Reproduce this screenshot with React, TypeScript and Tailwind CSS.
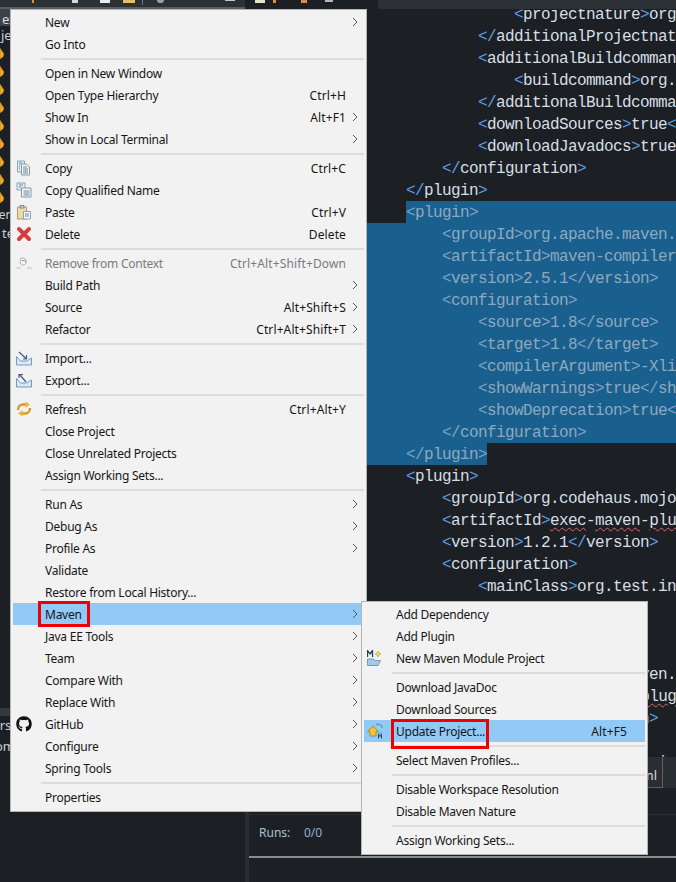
import { FaGithub } from "react-icons/fa";

type MenuRow = {
  label?: string;
  shortcut?: string;
  arrow?: boolean;
  icon?: React.ReactNode;
  disabled?: boolean;
  active?: boolean;
  mark?: string;
};

const CopyIcon = () => (
  <svg width="16" height="16" viewBox="0 0 16 16">
    <path d="M1.5 1h7v11h-7z" fill="#e4ebf2" stroke="#8ea3b5" />
    <path d="M5.5 4h5l3 3v8h-8z" fill="#f4f6f8" stroke="#8a9a8c" />
    <path d="M7 7h4M7 9h5M7 11h5M7 13h5M3 3h3M3 5h1M3 7h1M3 9h1" stroke="#5f87b0" />
  </svg>
);

const CopyNameIcon = () => (
  <svg width="16" height="16" viewBox="0 0 16 16">
    <path d="M1 1h8v7H1z" fill="#e4ebf2" stroke="#8ea3b5" />
    <path d="M5.5 6H15v9H5.5z" fill="#f4f6f8" stroke="#8a9a8c" />
    <path d="M3 3h4M3 5h2M7.5 9h6M7.5 11h6M7.5 13h6" stroke="#5f87b0" />
  </svg>
);

const PasteIcon = () => (
  <svg width="16" height="16" viewBox="0 0 16 16">
    <path d="M1.5 3h9v12h-9z" fill="#eed9a8" stroke="#b29a66" />
    <path d="M4 1.5h4V4H4z" fill="#c9d3dc" stroke="#75889a" />
    <path d="M7.5 7.5h7v7.5h-7z" fill="#f6f8fa" stroke="#8ea3b5" />
    <path d="M9 10h4M9 12h4" stroke="#5f87b0" />
  </svg>
);

const DeleteIcon = () => (
  <svg width="16" height="16" viewBox="0 0 16 16">
    <path d="M3 3l10 10M13 3L3 13" stroke="#d83c3c" strokeWidth="4" strokeLinecap="round" />
  </svg>
);

const RemoveIcon = () => (
  <svg width="16" height="16" viewBox="0 0 16 16" fill="none">
    <path d="M5 3h3l2 2v3l-2 2H6L4 8z" stroke="#b5b5b5" />
    <path d="M6 5.500h3l1.500 2" stroke="#9a9a9a" />
    <path d="M0 13h5M11 13h5" stroke="#c4c4c4" />
  </svg>
);

const ImportIcon = ({ out }: { out?: boolean }) => (
  <svg width="16" height="16" viewBox="0 0 16 16" fill="none">
    <path d="M.5 6.500v8.500h15V8" fill="#dbe7f2" stroke="#6f9cc6" />
    <path d="M.5 6.500l4 4.500h6l5-3" fill="#f2f6fa" stroke="#6f9cc6" />
    {out ? (
      <path d="M10 10L4 3M3 6V2.500h4" stroke="#3c5f86" strokeWidth="1.200" />
    ) : (
      <path d="M3 2l7 6.500M10.500 5v4H7" stroke="#3c5f86" strokeWidth="1.200" />
    )}
  </svg>
);

const RefreshIcon = () => (
  <svg width="16" height="16" viewBox="0 0 16 16" fill="none">
    <path d="M2 9c0-3 2-5.500 5-5.500h3" stroke="#d79a26" strokeWidth="2.400" />
    <path d="M9.500.500L14 3.500 9.500 7z" fill="#eeb540" />
    <path d="M14 7c0 3-2 5.500-5 5.500H6" stroke="#d79a26" strokeWidth="2.400" />
    <path d="M6.500 9L2 12.500 6.500 15.500z" fill="#eeb540" />
  </svg>
);

const MavenNewIcon = () => (
  <svg width="16" height="16" viewBox="0 0 16 16" fill="none">
    <path d="M.5 7V.5L3 4l2.500-3.500V7" stroke="#27405e" strokeWidth="1.300" />
    <path d="M11 1l1 2 2 1-2 1-1 2-1-2-2-1 2-1z" fill="#f5d467" stroke="#c09a2c" strokeWidth=".6" />
    <path d="M.5 9h6l1 1.500h6L11 15.500H.5z" fill="#a9c8e6" stroke="#6f9cc6" />
  </svg>
);

const MavenUpdateIcon = () => (
  <svg width="18" height="16" viewBox="0 0 18 16" fill="none">
    <path d="M9 2c3-2 6 0 6 3" stroke="#6f9cc6" strokeWidth="1.600" />
    <path d="M15 10c-1.500 1-3 1-4 .5" stroke="#6f9cc6" strokeWidth="1.600" />
    <path d="M6 3L.5 8.500H3V13h6V8.500h2.500z" fill="#f2c23e" stroke="#a87c18" strokeWidth=".8" />
    <path d="M11.500 15.500v-4l1.500 2 1.500-2v4" stroke="#27405e" strokeWidth="1" />
  </svg>
);

const mainMenu: (MenuRow | null)[] = [
  { label: "New", arrow: true },
  { label: "Go Into" },
  null,
  { label: "Open in New Window" },
  { label: "Open Type Hierarchy", shortcut: "Ctrl+H" },
  { label: "Show In", shortcut: "Alt+F1", arrow: true },
  { label: "Show in Local Terminal", arrow: true },
  null,
  { label: "Copy", shortcut: "Ctrl+C", icon: <CopyIcon /> },
  { label: "Copy Qualified Name", icon: <CopyNameIcon /> },
  { label: "Paste", shortcut: "Ctrl+V", icon: <PasteIcon /> },
  { label: "Delete", shortcut: "Delete", icon: <DeleteIcon /> },
  null,
  { label: "Remove from Context", shortcut: "Ctrl+Alt+Shift+Down", disabled: true, icon: <RemoveIcon /> },
  { label: "Build Path", arrow: true },
  { label: "Source", shortcut: "Alt+Shift+S", arrow: true },
  { label: "Refactor", shortcut: "Ctrl+Alt+Shift+T", arrow: true },
  null,
  { label: "Import...", icon: <ImportIcon /> },
  { label: "Export...", icon: <ImportIcon out /> },
  null,
  { label: "Refresh", shortcut: "Ctrl+Alt+Y", icon: <RefreshIcon /> },
  { label: "Close Project" },
  { label: "Close Unrelated Projects" },
  { label: "Assign Working Sets..." },
  null,
  { label: "Run As", arrow: true },
  { label: "Debug As", arrow: true },
  { label: "Profile As", arrow: true },
  { label: "Validate" },
  { label: "Restore from Local History..." },
  { label: "Maven", arrow: true, active: true, mark: "left-[25px] -top-[2px] w-[52px] h-[26px]" },
  { label: "Java EE Tools", arrow: true },
  { label: "Team", arrow: true },
  { label: "Compare With", arrow: true },
  { label: "Replace With", arrow: true },
  { label: "GitHub", arrow: true, icon: <FaGithub size={16} color="#111" /> },
  { label: "Configure", arrow: true },
  { label: "Spring Tools", arrow: true },
  null,
  { label: "Properties" },
];

const mavenMenu: (MenuRow | null)[] = [
  { label: "Add Dependency" },
  { label: "Add Plugin" },
  { label: "New Maven Module Project", icon: <MavenNewIcon /> },
  null,
  { label: "Download JavaDoc" },
  { label: "Download Sources" },
  {
    label: "Update Project...",
    shortcut: "Alt+F5",
    active: true,
    icon: <MavenUpdateIcon />,
    mark: "left-[27px] -top-[1px] w-[98px] h-[30px]",
  },
  null,
  { label: "Select Maven Profiles..." },
  null,
  { label: "Disable Workspace Resolution" },
  { label: "Disable Maven Nature" },
  null,
  { label: "Assign Working Sets..." },
];

function MenuItems({ rows }: { rows: (MenuRow | null)[] }) {
  return (
    <>
      {rows.map((r, i) =>
        r === null ? (
          <div key={i} className="h-[7px] flex items-center ml-[30px] mr-[2px]">
            <div className="h-[2px] w-full bg-[#dcdcdc]" />
          </div>
        ) : (
          <div
            key={i}
            className={`relative h-[22px] mx-[2px] flex items-center ${r.active ? "bg-[#91c9f7]" : ""} ${
              r.disabled ? "text-[#7a7a7a]" : "text-[#161616]"
            }`}
          >
            <div className="w-[28px] pl-[3px] flex items-center shrink-0">{r.icon}</div>
            <span className="pl-[4px] pt-[2px] flex-1 whitespace-nowrap tracking-[-0.25px]">{r.label}</span>
            {r.shortcut && <span className="pt-[2px] whitespace-nowrap tracking-[0.12px]">{r.shortcut}</span>}
            <div className="w-[18px] pl-[6px] shrink-0">
              {r.arrow && (
                <svg width="6" height="10" viewBox="0 0 6 10" fill="none">
                  <path d="M1 1l4 4-4 4" stroke="#555" />
                </svg>
              )}
            </div>
            {r.mark && <div className={`absolute border-[3px] border-[#ec0000] ${r.mark}`} />}
          </div>
        ),
      )}
    </>
  );
}

type CodeLine = { d: number; t: string; wavy?: boolean; sel?: "first" | "full" | "last" };

const code: CodeLine[] = [
  { d: 3, t: "<projectnature>org.eclipse.jdt.core.javanature</projectnature>" },
  { d: 2, t: "</additionalProjectnatures>" },
  { d: 2, t: "<additionalBuildcommands>" },
  { d: 3, t: "<buildcommand>org.eclipse.jdt.core.javabuilder</buildcommand>" },
  { d: 2, t: "</additionalBuildcommands>" },
  { d: 2, t: "<downloadSources>true</downloadSources>" },
  { d: 2, t: "<downloadJavadocs>true</downloadJavadocs>" },
  { d: 1, t: "</configuration>" },
  { d: 0, t: "</plugin>" },
  { d: 0, t: "<plugin>", sel: "first" },
  { d: 1, t: "<groupId>org.apache.maven.plugins</groupId>", sel: "full" },
  { d: 1, t: "<artifactId>maven-compiler-plugin</artifactId>", sel: "full" },
  { d: 1, t: "<version>2.5.1</version>", sel: "full" },
  { d: 1, t: "<configuration>", sel: "full" },
  { d: 2, t: "<source>1.8</source>", sel: "full" },
  { d: 2, t: "<target>1.8</target>", sel: "full" },
  { d: 2, t: "<compilerArgument>-Xlint:all</compilerArgument>", sel: "full" },
  { d: 2, t: "<showWarnings>true</showWarnings>", sel: "full" },
  { d: 2, t: "<showDeprecation>true</showDeprecation>", sel: "full" },
  { d: 1, t: "</configuration>", sel: "full" },
  { d: 0, t: "</plugin>", sel: "last" },
  { d: 0, t: "<plugin>" },
  { d: 1, t: "<groupId>org.codehaus.mojo</groupId>" },
  { d: 1, t: "<artifactId>exec-maven-plugin</artifactId>", wavy: true },
  { d: 1, t: "<version>1.2.1</version>" },
  { d: 1, t: "<configuration>" },
  { d: 2, t: "<mainClass>org.test.int1.Main</mainClass>" },
  { d: 1, t: "</configuration>" },
  { d: 0, t: "</plugin>" },
  { d: 0, t: "<plugin>" },
  { d: 1, t: "<groupId>org.apache.maven.plugins</groupId>" },
  { d: 1, t: "<artifactId>maven-jar-plugin</artifactId>", wavy: true },
  { d: 1, t: "<version>2.5.1</version>" },
  { d: 1, t: "<configuration>" },
  { d: 2, t: "<mainClass>org.test.int1.f</mainClass>" },
];

const indent = ["pl-[157px]", "pl-[193px]", "pl-[229px]", "pl-[265px]"];

function CodeText({ line }: { line: CodeLine }) {
  const parts = line.t.split(/(<\/?|>)/).filter(Boolean);
  return (
    <>
      {parts.map((p, i) => {
        if (p === "<" || p === "</" || p === ">") {
          return (
            <span key={i} className={line.sel ? "text-[#7fa3c4]" : "text-[#5c9fe6]"}>
              {p}
            </span>
          );
        }
        if (line.wavy && i > 0 && parts[i - 1] === ">") {
          return (
            <span key={i}>
              {p.split(/(-)/).map((w, j) =>
                w === "-" ? (
                  w
                ) : (
                  <span key={j} className="underline decoration-wavy decoration-[#d9676a] decoration-1 underline-offset-2">
                    {w}
                  </span>
                ),
              )}
            </span>
          );
        }
        return <span key={i}>{p}</span>;
      })}
    </>
  );
}

function CodeRow({ line }: { line: CodeLine }) {
  const tone = line.sel ? "text-[#8ea9bd]" : "text-[#d6dfe6]";
  if (line.sel === "first") {
    return (
      <div className={`h-[22px] leading-[25px] ml-[157px] bg-[#1a608f] ${tone}`}>
        <CodeText line={line} />
      </div>
    );
  }
  if (line.sel === "last") {
    return (
      <div className={`h-[22px] leading-[25px] w-fit bg-[#1a608f] ${indent[line.d]} ${tone}`}>
        <CodeText line={line} />
      </div>
    );
  }
  return (
    <div className={`h-[22px] leading-[25px] ${indent[line.d]} ${tone} ${line.sel ? "bg-[#1a608f]" : ""}`}>
      <CodeText line={line} />
    </div>
  );
}

const treeIcons = [0, 1, 2, 3, 4, 5, 6, 7, 8];

export default function App() {
  return (
    <div className="relative w-[676px] h-[882px] overflow-hidden flex flex-col bg-[#1c2024] font-['Noto_Sans',sans-serif] text-[12px]">
      {/* toolbar strip, mostly covered by the menu */}
      <div className="relative z-10 h-[9px] shrink-0 flex bg-[#2c3135]">
        <div className="w-[245px] h-[9px] flex items-start border-b-2 border-[#565e65]">
          <div className="ml-[32px] w-[2px] h-[3px] bg-[#e0902a]" />
          <div className="ml-[38px] w-[6px] h-[3px] bg-[#d8d8d8]" />
          <div className="ml-[22px] w-[10px] h-[3px] bg-[#e8ecf0]" />
          <div className="ml-[13px] w-[12px] h-[3px] bg-[#e8c060]" />
          <div className="ml-[7px] w-px h-[5px] bg-[#70767c]" />
          <div className="ml-[14px] w-[7px] h-[3px] rounded-b-full bg-[#9aa0a5]" />
          <div className="ml-[61px] w-[10px] h-px bg-[#c8c8c8]" />
        </div>
        <div className="w-[133px] h-[9px] flex items-start bg-[#1c2024]">
          <div className="ml-[10px] w-[10px] h-[3px] bg-[#e6e2c8]" />
          <div className="ml-[8px] w-[3px] h-[3px] bg-[#e0902a]" />
          <div className="ml-[25px] w-[6px] h-[3px] bg-[#d89040]" />
          <div className="ml-[18px] w-[8px] h-[2px] bg-[#b8b8b8]" />
        </div>
      </div>

      <div className="flex-1 flex min-h-0">
        {/* package explorer, only its left edge shows */}
        <div className="w-[245px] shrink-0 flex flex-col text-[#c8d0d6] text-[13px] overflow-hidden">
          <div className="h-[17px] w-[245px] bg-[#3a4147] pl-[2px] leading-[20px] text-[#d8dde0]">ex</div>
          <div className="h-[18px] pl-[1px] leading-[18px]">je</div>
          {treeIcons.map((n) => (
            <div key={n} className="h-[18px] flex items-center">
              <svg width="5" height="13" viewBox="0 0 5 13">
                <path d="M0 1l2 3 2 3-1 3-3 2z" fill="#f0a92a" stroke="#a8701a" strokeWidth=".4" />
              </svg>
            </div>
          ))}
          <div className="h-[18px] -ml-[7px] leading-[18px] text-[12px]">serv</div>
          <div className="h-[18px] pl-[2px] leading-[18px]">te</div>
          <div className="h-[466px]" />
          <div className="h-[8px] bg-[#33383d]" />
          <div className="h-[21px] -ml-[10px] leading-[18px]">Hrs</div>
          <div className="h-[21px] -ml-[5px] leading-[18px]">om</div>
        </div>
        <div className="w-[4px] shrink-0 bg-[#2a2e33]" />

        <div className="flex-1 min-w-0 flex flex-col">
          <div className="h-[748px] shrink-0 overflow-hidden">
            <div className="-mt-[6px] font-['Liberation_Mono',monospace] text-[16px] tracking-[-0.6px] whitespace-nowrap">
              {code.map((line, i) => (
                <CodeRow key={i} line={line} />
              ))}
            </div>
          </div>

          <div className="h-[31px] shrink-0 flex justify-end pr-[13px] bg-[#2a2e33]">
            <div className="flex items-center pt-[7px] pr-[5px] pl-[10px] border-r border-b border-[#5c6166] text-[#d8d8d8] text-[13px]">
              pom.xml
            </div>
          </div>
          <div className="h-[27px] shrink-0 border-b border-[#2a2e33]" />
          <div className="h-[41px] shrink-0 flex items-center pl-[10px] pb-[6px] text-[#a9c0d2]">
            <span className="w-[45px]">Runs:</span>
            <span className="text-[#8fb3d4]">0/0</span>
          </div>
          <div className="h-[2px] shrink-0 bg-[#8a8d90]" />
          <div className="flex-1" />
        </div>
      </div>

      {/* context menus */}
      <div className="absolute z-20 left-[10px] top-[9px] w-[357px] pt-px pb-[3px] bg-[#f2f2f2] border border-[#b4b4b4]">
        <MenuItems rows={mainMenu} />
      </div>
      <div className="absolute z-30 left-[361px] top-[601px] w-[287px] pt-px pb-[3px] bg-[#f2f2f2] border border-[#b4b4b4]">
        <MenuItems rows={mavenMenu} />
      </div>
    </div>
  );
}
